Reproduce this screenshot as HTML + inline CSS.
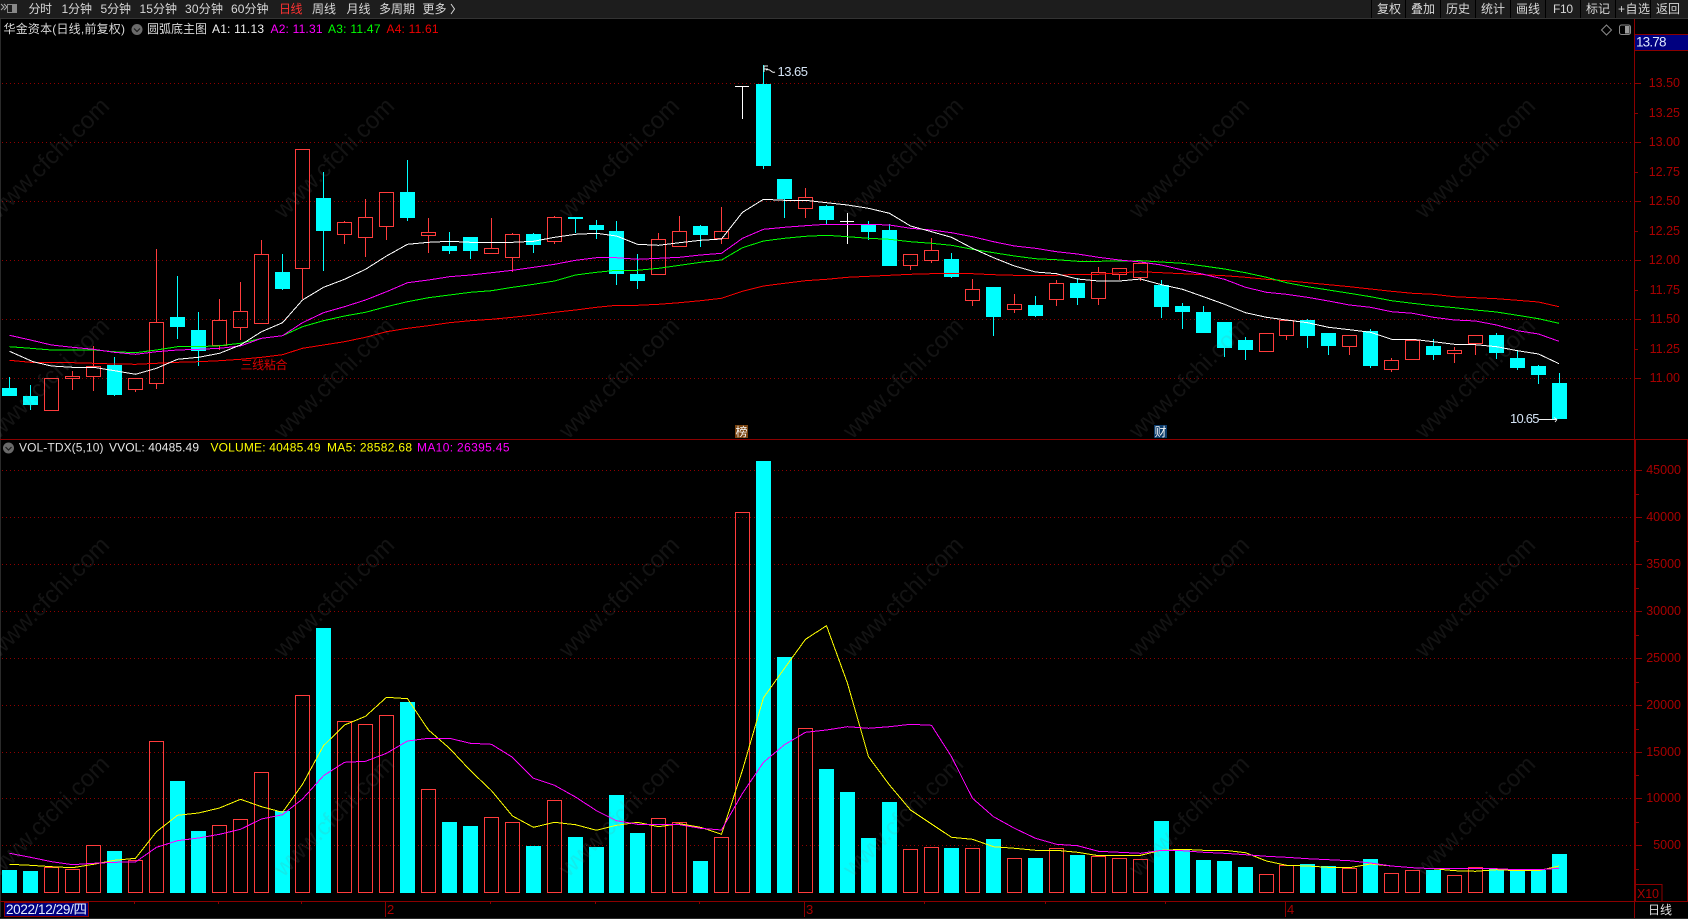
<!DOCTYPE html>
<html lang="zh">
<head>
<meta charset="utf-8">
<title>华金资本 日线</title>
<style>
html,body{margin:0;padding:0;background:#000;width:1688px;height:919px;overflow:hidden}
svg{display:block}
text{font-family:"Liberation Sans","Noto Sans CJK SC",sans-serif;font-size:12px}
.ax text{fill:#a80000;font-size:12.5px;text-anchor:end}
.wm text{fill:rgba(128,128,128,.15);font-size:24px;text-anchor:middle}
.tb text{fill:#d8d8d8}
</style>
</head>
<body>
<svg width="1688" height="919" viewBox="0 0 1688 919" xmlns="http://www.w3.org/2000/svg">
<rect width="1688" height="919" fill="#000"/>

<!-- top bar -->
<rect width="1688" height="18" fill="#1d1d1d"/>
<rect y="18" width="1688" height="1" fill="#333"/>
<path d="M1371.5 0v18M1405.5 0v18M1440.5 0v18M1475.5 0v18M1510.5 0v18M1545.5 0v18M1580.5 0v18M1615.5 0v18M1650.5 0v18" stroke="#000" fill="none"/>
<path d="M1 4l3 3-3 3M4 4l3 3-3 3" stroke="#aaa" fill="none"/>
<rect x="7.5" y="4.5" width="9" height="8" fill="none" stroke="#888"/>
<rect x="12" y="5" width="4" height="7" fill="#888"/>
<g class="tb">
<text x="28.5" y="13" textLength="23.5">分时</text>
<text x="61.5" y="13" textLength="30.5">1分钟</text>
<text x="100.5" y="13" textLength="30.5">5分钟</text>
<text x="139.5" y="13" textLength="37.5">15分钟</text>
<text x="185" y="13" textLength="38">30分钟</text>
<text x="231" y="13" textLength="37.5">60分钟</text>
<text x="279" y="13" textLength="23.5" style="fill:#ff3232">日线</text>
<text x="312" y="13" textLength="24">周线</text>
<text x="346.5" y="13" textLength="24">月线</text>
<text x="379" y="13" textLength="36">多周期</text>
<text x="422.5" y="13" textLength="24">更多</text>
<path d="M451 4l3.5 5-3.5 5" stroke="#d8d8d8" fill="none"/>
<text x="1377" y="13" textLength="24">复权</text>
<text x="1411" y="13" textLength="24">叠加</text>
<text x="1446" y="13" textLength="24">历史</text>
<text x="1481" y="13" textLength="24">统计</text>
<text x="1516" y="13" textLength="24">画线</text>
<text x="1553" y="13" textLength="20">F10</text>
<text x="1586" y="13" textLength="24">标记</text>
<text x="1618" y="13" textLength="32">+自选</text>
<text x="1656" y="13" textLength="24">返回</text>
</g>

<!-- left edge -->
<rect x="0" y="19" width="1" height="898" fill="#2a2a2a"/>

<!-- dotted grid -->
<path d="M2 83.5H1634M2 142.5H1634M2 201.5H1634M2 260.5H1634M2 319.5H1634M2 378.5H1634M2 470.5H1634M2 517.5H1634M2 564.5H1634M2 611.5H1634M2 658.5H1634M2 705.5H1634M2 752.5H1634M2 798.5H1634M2 845.5H1634" stroke="#900000" stroke-dasharray="1 3" fill="none" shape-rendering="crispEdges"/>

<!-- frame and axes -->
<g stroke="#8b0000" fill="none" shape-rendering="crispEdges">
<path d="M1634.5 19V919"/>
<path d="M1635.5 439V901"/>
<path d="M1687.5 439V901"/>
<path d="M0 439.5H1688"/>
<path d="M0 901.5H1688"/>
<path d="M1635 34.5H1688M1635 50.5H1688"/>
<path d="M1635 83.5h6M1635 113.5h3M1635 142.5h6M1635 172.5h3M1635 201.5h6M1635 231.5h3M1635 260.5h6M1635 290.5h3M1635 319.5h6M1635 349.5h3M1635 378.5h6"/>
<path d="M1636 470.5h6M1636 494.5h3M1636 517.5h6M1636 541.5h3M1636 564.5h6M1636 588.5h3M1636 611.5h6M1636 635.5h3M1636 658.5h6M1636 682.5h3M1636 705.5h6M1636 729.5h3M1636 752.5h6M1636 775.5h3M1636 798.5h6M1636 822.5h3M1636 845.5h6M1636 869.5h3"/>
<path d="M1635 884.5h27V901"/>
<path d="M134.5 901v3M218.5 901v3M301.5 901v3M385.5 901v16M490.5 901v3M595.5 901v3M699.5 901v3M804.5 901v16M924.5 901v3M1045.5 901v3M1165.5 901v3M1285.5 901v16"/>
</g>
<rect x="1635" y="35" width="53" height="15" fill="#000080"/>
<text x="1636" y="46.5" textLength="30.5" style="font-size:13.5px;fill:#dfe8ff">13.78</text>

<g class="ax">
<text x="1680" y="87">13.50</text>
<text x="1680" y="117">13.25</text>
<text x="1680" y="146">13.00</text>
<text x="1680" y="176">12.75</text>
<text x="1680" y="205">12.50</text>
<text x="1680" y="235">12.25</text>
<text x="1680" y="264">12.00</text>
<text x="1680" y="294">11.75</text>
<text x="1680" y="323">11.50</text>
<text x="1680" y="353">11.25</text>
<text x="1680" y="382">11.00</text>
<text x="1681" y="474">45000</text>
<text x="1681" y="521">40000</text>
<text x="1681" y="568">35000</text>
<text x="1681" y="615">30000</text>
<text x="1681" y="662">25000</text>
<text x="1681" y="709">20000</text>
<text x="1681" y="756">15000</text>
<text x="1681" y="802">10000</text>
<text x="1681" y="849">5000</text>
<text x="1659" y="898" textLength="22">X10</text>
</g>
<text x="387" y="914" style="font-size:13px;fill:#a80000">2</text>
<text x="806" y="914" style="font-size:13px;fill:#a80000">3</text>
<text x="1287" y="914" style="font-size:13px;fill:#a80000">4</text>
<text x="1648" y="914" textLength="24" style="fill:#e0e0e0">日线</text>

<!-- top-right icons -->
<path d="M1606.5 25l5 5-5 5-5-5z" stroke="#8a8a8a" fill="none"/>
<rect x="1619.5" y="25" width="11" height="9.5" rx="2" fill="none" stroke="#8a8a8a"/>
<rect x="1625" y="26" width="4.5" height="7.5" fill="#9a9a9a"/>

<!-- title row -->
<text x="3.5" y="33" textLength="121.5" fill="#d8d8d8">华金资本(日线,前复权)</text>
<circle cx="137" cy="29.5" r="5.5" fill="#6a6a6a"/>
<path d="M134 28.5l3 3 3-3" stroke="#1c1c1c" stroke-width="1.2" fill="none"/>
<text x="147" y="33" textLength="60" fill="#d8d8d8">圆弧底主图</text>
<text x="212" y="33" textLength="52" fill="#f0f0f0">A1: 11.13</text>
<text x="270.5" y="33" textLength="52" fill="#ff00ff">A2: 11.31</text>
<text x="328" y="33" textLength="52.5" fill="#00ff00">A3: 11.47</text>
<text x="386.5" y="33" textLength="52" fill="#f00000">A4: 11.61</text>

<!-- volume title row -->
<circle cx="8.5" cy="448" r="5.5" fill="#6a6a6a"/>
<path d="M5.5 447l3 3 3-3" stroke="#1c1c1c" stroke-width="1.2" fill="none"/>
<text x="19" y="451.5" textLength="84.5" fill="#e0e0e0">VOL-TDX(5,10)</text>
<text x="109" y="451.5" textLength="90" fill="#e8e8e8">VVOL: 40485.49</text>
<text x="210.5" y="451.5" textLength="110" fill="#ffff00">VOLUME: 40485.49</text>
<text x="327" y="451.5" textLength="85" fill="#ffff00">MA5: 28582.68</text>
<text x="417" y="451.5" textLength="92.5" fill="#ff00ff">MA10: 26395.45</text>

<!-- main candles: cyan -->
<path fill="#0ff" shape-rendering="crispEdges" d="M2 388h15v8h-15zM9 377h1v11h-1zM23 396h15v9h-15zM30 385h1v25h-1zM107 365h15v30h-15zM114 357h1v39h-1zM170 317h15v10h-15zM177 276h1v63h-1zM191 330h15v21h-15zM198 312h1v54h-1zM275 272h15v17h-15zM282 254h1v36h-1zM316 198h15v33h-15zM323 172h1v99h-1zM400 192h15v26h-15zM407 160h1v61h-1zM442 246h15v5h-15zM449 232h1v22h-1zM463 237h15v14h-15zM470 237h1v22h-1zM526 234h15v11h-15zM533 233h1v20h-1zM568 217h15v2h-15zM575 217h1v16h-1zM589 225h15v5h-15zM596 220h1v19h-1zM609 231h15v43h-15zM616 221h1v64h-1zM630 274h15v7h-15zM637 254h1v35h-1zM693 226h15v9h-15zM700 225h1v22h-1zM756 84h15v82h-15zM763 65h1v104h-1zM777 179h15v20h-15zM784 179h1v39h-1zM819 206h15v14h-15zM826 205h1v19h-1zM861 225h15v7h-15zM868 221h1v19h-1zM882 230h15v36h-15zM889 224h1v42h-1zM944 259h15v18h-15zM951 253h1v25h-1zM986 287h15v30h-15zM993 287h1v49h-1zM1028 305h15v11h-15zM1035 296h1v21h-1zM1070 283h15v15h-15zM1077 278h1v27h-1zM1154 285h15v22h-15zM1161 280h1v38h-1zM1175 306h15v6h-15zM1182 303h1v26h-1zM1196 312h15v21h-15zM1203 306h1v27h-1zM1217 322h15v26h-15zM1224 322h1v35h-1zM1238 340h15v10h-15zM1245 337h1v23h-1zM1300 320h15v16h-15zM1307 319h1v29h-1zM1321 333h15v13h-15zM1328 333h1v22h-1zM1363 331h15v35h-15zM1370 329h1v39h-1zM1426 346h15v9h-15zM1433 339h1v21h-1zM1489 335h15v18h-15zM1496 333h1v26h-1zM1510 358h15v10h-15zM1517 351h1v19h-1zM1531 366h15v9h-15zM1538 365h1v19h-1zM1552 383h15v36h-15zM1559 373h1v10h-1z"/>

<!-- main candles: red hollow -->
<path fill="none" stroke="#ff3c3c" shape-rendering="crispEdges" d="M44.5 378.5h14v32h-14zM65.5 376.5h14v2h-14zM72.5 371v5M72.5 379v11M86.5 366.5h14v10h-14zM93.5 346v20M93.5 377v14M128.5 378.5h14v11h-14zM135.5 390v2M149.5 322.5h14v61h-14zM156.5 249v73M156.5 384v5M212.5 320.5h14v25h-14zM219.5 299v21M219.5 346v4M233.5 311.5h14v16h-14zM240.5 282v29M240.5 328v12M254.5 254.5h14v69h-14zM261.5 240v14M295.5 149.5h14v119h-14zM302.5 269v30M337.5 222.5h14v12h-14zM344.5 221v1M344.5 235v9M358.5 217.5h14v20h-14zM365.5 199v18M365.5 238v19M379.5 192.5h14v34h-14zM386.5 227v13M421.5 232.5h14v3h-14zM428.5 218v14M428.5 236v17M484.5 248.5h14v5h-14zM491.5 218v30M505.5 234.5h14v23h-14zM512.5 233v1M512.5 258v14M547.5 217.5h14v24h-14zM554.5 216v1M554.5 242v2M651.5 239.5h14v35h-14zM658.5 233v6M672.5 231.5h14v15h-14zM679.5 216v15M714.5 231.5h14v7h-14zM721.5 207v24M721.5 239v5M798.5 197.5h14v11h-14zM805.5 188v9M805.5 209v9M903.5 254.5h14v11h-14zM910.5 266v4M924.5 250.5h14v10h-14zM931.5 238v12M931.5 261v2M965.5 289.5h14v11h-14zM972.5 279v10M972.5 301v5M1007.5 304.5h14v5h-14zM1014.5 294v10M1014.5 310v3M1049.5 283.5h14v16h-14zM1056.5 280v3M1056.5 300v6M1091.5 272.5h14v26h-14zM1098.5 267v5M1098.5 299v6M1112.5 268.5h14v6h-14zM1119.5 275v5M1133.5 263.5h14v14h-14zM1140.5 278v3M1259.5 333.5h14v18h-14zM1279.5 320.5h14v15h-14zM1286.5 336v4M1342.5 335.5h14v11h-14zM1349.5 347v8M1384.5 360.5h14v9h-14zM1391.5 358v2M1391.5 370v2M1405.5 340.5h14v19h-14zM1412.5 339v1M1447.5 350.5h14v3h-14zM1454.5 347v3M1454.5 354v9M1468.5 335.5h14v8h-14zM1475.5 344v11"/>

<!-- white doji -->
<path fill="none" stroke="#fff" shape-rendering="crispEdges" d="M735 86.5h14M742.5 86v33M840 221.5h14M847.5 213v31"/>

<!-- MA lines main -->
<g fill="none" stroke-width="1" shape-rendering="crispEdges">
<polyline stroke="#f00" points="9.5,360.3 30.5,362.3 51.5,362.3 72.5,362.7 93.5,363.3 114.5,364 135.5,364.3 156.5,363.3 177.5,362.3 198.5,361.7 219.5,360.7 240.5,359.3 261.5,357.3 282.5,354.7 302.5,348.3 323.5,345 344.5,341.7 365.5,337.3 386.5,331.7 407.5,328.3 428.5,325.7 449.5,322.7 470.5,320.7 491.5,319.3 512.5,317.3 533.5,315 554.5,312.3 575.5,310 596.5,307.3 616.5,305.3 637.5,305.3 658.5,304.3 679.5,302.7 700.5,300.7 721.5,298.3 742.5,291.3 763.5,286 784.5,283.3 805.5,280.7 826.5,279.3 847.5,277.3 868.5,276.3 889.5,275.3 910.5,274.3 931.5,273.7 951.5,273.7 972.5,273.7 993.5,274.7 1014.5,275.3 1035.5,275.7 1056.5,275.3 1077.5,274.3 1098.5,274.3 1119.5,272.7 1140.5,271.7 1161.5,272.7 1182.5,273.7 1203.5,274.7 1224.5,275.7 1245.5,277.3 1266.5,279.3 1286.5,280.7 1307.5,282.7 1328.5,284.7 1349.5,286.7 1370.5,289 1391.5,291.3 1412.5,293.3 1433.5,294.3 1454.5,296.7 1475.5,297.7 1496.5,298.7 1517.5,300.3 1538.5,302 1559,306.7"/>
<polyline stroke="#0f0" points="9.5,346.7 30.5,348.3 51.5,350 72.5,350 93.5,350 114.5,351.7 135.5,352.7 156.5,350 177.5,346.7 198.5,346.7 219.5,345.7 240.5,343.3 261.5,338.3 282.5,335.7 302.5,326.7 323.5,320.7 344.5,316 365.5,312.3 386.5,306.7 407.5,301.7 428.5,297.7 449.5,295 470.5,292.3 491.5,290.7 512.5,287.3 533.5,284.3 554.5,281 575.5,275 596.5,272.3 616.5,270.3 637.5,270.3 658.5,268.3 679.5,265.3 700.5,262.3 721.5,260 742.5,247.7 763.5,241 784.5,238.3 805.5,236.3 826.5,235.3 847.5,236.7 868.5,238.3 889.5,239.3 910.5,241.7 931.5,243.3 951.5,245.3 972.5,249.3 993.5,252.7 1014.5,256 1035.5,258.7 1056.5,259.7 1077.5,261.3 1098.5,261.3 1119.5,261 1140.5,260.7 1161.5,262 1182.5,263.3 1203.5,266 1224.5,269 1245.5,272.7 1266.5,277.3 1286.5,282.7 1307.5,286.7 1328.5,290 1349.5,293.3 1370.5,296.7 1391.5,300.7 1412.5,303.3 1433.5,305.7 1454.5,307.7 1475.5,310 1496.5,312 1517.5,315.3 1538.5,318.7 1559,323.3"/>
<polyline stroke="#f0f" points="9.5,335.3 30.5,340 51.5,345 72.5,347.3 93.5,349.3 114.5,352.3 135.5,354.3 156.5,351.7 177.5,350 198.5,349.3 219.5,348.3 240.5,346 261.5,338.3 282.5,335.7 302.5,322.7 323.5,312.7 344.5,306.7 365.5,300 386.5,291.7 407.5,282.7 428.5,280 449.5,276.7 470.5,275 491.5,272.7 512.5,270.3 533.5,267.3 554.5,264.3 575.5,260.3 596.5,257.7 616.5,257.7 637.5,259.3 658.5,258.3 679.5,257.3 700.5,255 721.5,253.3 742.5,238.3 763.5,229.3 784.5,227.3 805.5,225.7 826.5,224.3 847.5,224.3 868.5,224.3 889.5,225 910.5,228.3 931.5,230 951.5,232.7 972.5,236.7 993.5,241.7 1014.5,246 1035.5,248.3 1056.5,251.7 1077.5,254 1098.5,257.3 1119.5,260 1140.5,262 1161.5,265 1182.5,270 1203.5,274.3 1224.5,279.3 1245.5,287.3 1266.5,292.3 1286.5,294.3 1307.5,297.3 1328.5,301 1349.5,305 1370.5,307.3 1391.5,311.7 1412.5,313.3 1433.5,317.3 1454.5,320 1475.5,321 1496.5,325 1517.5,330.7 1538.5,334 1559,341.3"/>
<polyline stroke="#fff" points="9.5,351.3 33,361.7 51.5,366 72.5,367.3 93.5,367.3 114.5,370.7 135.5,374.3 156.5,368.3 177.5,359.3 198.5,357.3 219.5,353.3 240.5,345 261.5,331.7 282.5,322.7 302.5,300 323.5,287.3 344.5,279.3 365.5,269.3 386.5,256 407.5,244.3 428.5,242.3 449.5,241.3 470.5,242.3 491.5,242.3 512.5,242.3 533.5,241.3 554.5,237.3 575.5,234.3 596.5,233.3 616.5,236 637.5,244.3 658.5,245.3 679.5,242.7 700.5,240.3 721.5,239 742.5,212.3 763.5,199.3 784.5,200.3 805.5,200.3 826.5,202.7 847.5,205 868.5,208.3 889.5,213.3 910.5,226 931.5,231.7 951.5,237.3 972.5,248.3 993.5,257.7 1014.5,266 1035.5,272 1056.5,273.7 1077.5,279 1098.5,281 1119.5,281 1140.5,279 1161.5,284.7 1182.5,289.3 1203.5,296.7 1224.5,304.3 1245.5,312.7 1266.5,317.3 1286.5,320 1307.5,322.7 1328.5,327.3 1349.5,329.7 1370.5,332.3 1391.5,339.3 1412.5,339.3 1433.5,341.7 1454.5,344.3 1475.5,344.7 1496.5,346.7 1517.5,350.7 1538.5,354 1559,363.7"/>
</g>

<!-- high / low marks -->
<path d="M764 72v-6h4M764 69h4M766 70q3 -1 5 1t4 1" stroke="#eee" fill="none"/>
<text x="777.5" y="76" textLength="30.5" style="font-size:13px;fill:#d5e4f5">13.65</text>
<text x="1510" y="423" textLength="29.5" style="font-size:13px;fill:#d5e4f5">10.65</text>
<path d="M1539 419.5h18M1557 419.5l-3-2M1555 422l2-2.5" stroke="#eee" fill="none"/>

<!-- label -->
<text x="240.5" y="369" textLength="47" style="fill:#d80000">三线粘合</text>

<!-- badges -->
<rect x="735" y="425" width="13" height="13" fill="#7a4410"/>
<text x="735.5" y="436" style="font-size:12px;fill:#f4f4f4">榜</text>
<rect x="1154" y="425" width="13" height="13" fill="#0c3c6c"/>
<text x="1154.5" y="436" style="font-size:12px;fill:#f4f4f4">财</text>

<!-- volume cyan -->
<path fill="#0ff" shape-rendering="crispEdges" d="M2 870h15V893H2zM23 871h15V893H23zM107 851h15V893H107zM170 781h15V893H170zM191 831h15V893H191zM275 811h15V893H275zM316 628h15V893H316zM400 702h15V893H400zM442 822h15V893H442zM463 826h15V893H463zM526 846h15V893H526zM568 837h15V893H568zM589 847h15V893H589zM609 795h15V893H609zM630 833h15V893H630zM693 861h15V893H693zM756 461h15V893H756zM777 657h15V893H777zM819 769h15V893H819zM840 792h15V893H840zM861 838h15V893H861zM882 802h15V893H882zM944 848h15V893H944zM986 839h15V893H986zM1028 858h15V893H1028zM1070 855h15V893H1070zM1154 821h15V893H1154zM1175 850h15V893H1175zM1196 860h15V893H1196zM1217 861h15V893H1217zM1238 867h15V893H1238zM1300 864h15V893H1300zM1321 866h15V893H1321zM1363 859h15V893H1363zM1426 870h15V893H1426zM1489 869h15V893H1489zM1510 870h15V893H1510zM1531 870h15V893H1531zM1552 854h15V893H1552z"/>

<!-- volume red -->
<path fill="none" stroke="#ff3c3c" shape-rendering="crispEdges" d="M44.5 867.5h14V892.5h-14zM65.5 869.5h14V892.5h-14zM86.5 845.5h14V892.5h-14zM128.5 860.5h14V892.5h-14zM149.5 741.5h14V892.5h-14zM212.5 825.5h14V892.5h-14zM233.5 819.5h14V892.5h-14zM254.5 772.5h14V892.5h-14zM295.5 695.5h14V892.5h-14zM337.5 721.5h14V892.5h-14zM358.5 724.5h14V892.5h-14zM379.5 715.5h14V892.5h-14zM421.5 789.5h14V892.5h-14zM484.5 817.5h14V892.5h-14zM505.5 822.5h14V892.5h-14zM547.5 800.5h14V892.5h-14zM651.5 818.5h14V892.5h-14zM672.5 822.5h14V892.5h-14zM714.5 837.5h14V892.5h-14zM735.5 512.5h14V892.5h-14zM798.5 728.5h14V892.5h-14zM903.5 849.5h14V892.5h-14zM924.5 847.5h14V892.5h-14zM965.5 848.5h14V892.5h-14zM1007.5 858.5h14V892.5h-14zM1049.5 848.5h14V892.5h-14zM1091.5 856.5h14V892.5h-14zM1112.5 858.5h14V892.5h-14zM1133.5 859.5h14V892.5h-14zM1259.5 874.5h14V892.5h-14zM1279.5 865.5h14V892.5h-14zM1342.5 868.5h14V892.5h-14zM1384.5 873.5h14V892.5h-14zM1405.5 870.5h14V892.5h-14zM1447.5 875.5h14V892.5h-14zM1468.5 867.5h14V892.5h-14z"/>

<!-- volume MA lines -->
<g fill="none" stroke-width="1" shape-rendering="crispEdges">
<polyline stroke="#ff0" points="9.5,864.3 30.5,865.3 51.5,866.7 72.5,867.7 93.5,864.3 114.5,860.3 135.5,858.3 156.5,831.7 177.5,815.3 198.5,813 219.5,808 240.5,799.3 261.5,806.7 282.5,812.3 302.5,784.3 323.5,745.7 344.5,725 365.5,716.3 386.5,697.3 407.5,698.7 428.5,730 449.5,748.3 470.5,770.7 491.5,790.7 512.5,816 533.5,827.3 554.5,822.3 575.5,824.7 596.5,830.3 616.5,825.3 637.5,822.3 658.5,826.7 679.5,823.7 700.5,827.3 721.5,834.3 742.5,770 763.5,697.7 784.5,668.3 805.5,639.3 826.5,625.7 847.5,683.3 868.5,756.7 889.5,785 910.5,810 931.5,824 951.5,837.3 972.5,839.3 993.5,846.7 1014.5,848.3 1035.5,850.3 1056.5,850.3 1077.5,852.3 1098.5,855.7 1119.5,855.7 1140.5,855.3 1161.5,850.3 1182.5,849.3 1203.5,850.3 1224.5,850.3 1245.5,852.7 1266.5,861 1286.5,865.3 1307.5,866 1328.5,867.3 1349.5,867.7 1370.5,864 1391.5,866 1412.5,867.7 1433.5,868.7 1454.5,870.7 1475.5,871.3 1496.5,869.7 1517.5,870.7 1538.5,870.7 1559,866"/>
<polyline stroke="#f0f" points="9.5,853.3 30.5,857.3 51.5,861.7 72.5,864.7 93.5,863.3 114.5,862.3 135.5,862 156.5,847.3 177.5,840.7 198.5,838 219.5,834.3 240.5,829.3 261.5,819 282.5,814.7 302.5,799 323.5,775.7 344.5,762.3 365.5,761.3 386.5,753.3 407.5,741 428.5,738.3 449.5,738.3 470.5,743.3 491.5,744.3 512.5,757.3 533.5,778.3 554.5,785.3 575.5,797 596.5,810.7 616.5,820.7 637.5,824.3 658.5,824.7 679.5,824.7 700.5,828.3 721.5,830 742.5,793.3 763.5,762.3 784.5,744.7 805.5,732.3 826.5,730 847.5,726.7 868.5,728.3 889.5,726.7 910.5,724.3 931.5,725.3 951.5,756.7 972.5,798.3 993.5,816.7 1014.5,828.3 1035.5,838.3 1056.5,844.3 1077.5,845.7 1098.5,851.3 1119.5,852.3 1140.5,853.3 1161.5,850.3 1182.5,850.7 1203.5,852.3 1224.5,853.3 1245.5,854.7 1266.5,856.3 1286.5,857.3 1307.5,858.7 1328.5,859.7 1349.5,860.7 1370.5,863 1391.5,866 1412.5,867.7 1433.5,868.7 1454.5,868.7 1475.5,868.7 1496.5,868.7 1517.5,869.7 1538.5,869.7 1559,868.3"/>
</g>

<!-- date box -->
<rect x="4.5" y="902.5" width="84" height="14" fill="#000080" stroke="#8b0000"/>
<text x="6" y="914" textLength="81" style="font-size:13.5px;fill:#e8f0ff">2022/12/29/四</text>
<rect y="918" width="1688" height="1" fill="#2a2a2a"/>

<!-- watermarks -->
<g class="wm">
<text transform="translate(49 158) rotate(-45)" y="8">www.cfchi.com</text>
<text transform="translate(334 158) rotate(-45)" y="8">www.cfchi.com</text>
<text transform="translate(619 158) rotate(-45)" y="8">www.cfchi.com</text>
<text transform="translate(903 158) rotate(-45)" y="8">www.cfchi.com</text>
<text transform="translate(1189 158) rotate(-45)" y="8">www.cfchi.com</text>
<text transform="translate(1475 158) rotate(-45)" y="8">www.cfchi.com</text>
<text transform="translate(49 378) rotate(-45)" y="8">www.cfchi.com</text>
<text transform="translate(334 378) rotate(-45)" y="8">www.cfchi.com</text>
<text transform="translate(619 378) rotate(-45)" y="8">www.cfchi.com</text>
<text transform="translate(903 378) rotate(-45)" y="8">www.cfchi.com</text>
<text transform="translate(1189 378) rotate(-45)" y="8">www.cfchi.com</text>
<text transform="translate(1475 378) rotate(-45)" y="8">www.cfchi.com</text>
<text transform="translate(49 597) rotate(-45)" y="8">www.cfchi.com</text>
<text transform="translate(334 597) rotate(-45)" y="8">www.cfchi.com</text>
<text transform="translate(619 597) rotate(-45)" y="8">www.cfchi.com</text>
<text transform="translate(903 597) rotate(-45)" y="8">www.cfchi.com</text>
<text transform="translate(1189 597) rotate(-45)" y="8">www.cfchi.com</text>
<text transform="translate(1475 597) rotate(-45)" y="8">www.cfchi.com</text>
<text transform="translate(49 816) rotate(-45)" y="8">www.cfchi.com</text>
<text transform="translate(334 816) rotate(-45)" y="8">www.cfchi.com</text>
<text transform="translate(619 816) rotate(-45)" y="8">www.cfchi.com</text>
<text transform="translate(903 816) rotate(-45)" y="8">www.cfchi.com</text>
<text transform="translate(1189 816) rotate(-45)" y="8">www.cfchi.com</text>
<text transform="translate(1475 816) rotate(-45)" y="8">www.cfchi.com</text>
</g>
</svg>
</body>
</html>
